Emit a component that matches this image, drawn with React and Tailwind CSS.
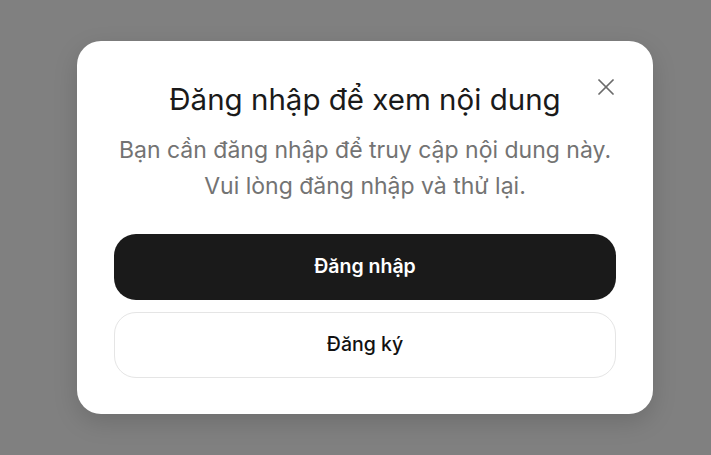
import { X } from "lucide-react"

export default function App() {
  return (
    <div
      className="w-full min-h-screen bg-[#808080] flex items-start pl-[77px] pt-[41px]"
      style={{ fontFamily: "Inter, 'Noto Sans', sans-serif" }}
    >
      <div className="relative w-[576px] h-[373px] bg-white rounded-[24px] shadow-[0_8px_24px_rgba(0,0,0,0.15)] px-[37px] pt-[40px] flex flex-col items-center">
        <button className="absolute top-[32px] right-[33px] text-[#6b6b6b]">
          <X size={28} strokeWidth={1.5} />
        </button>

        <h2 className="text-[29.5px] leading-[36px] font-normal text-[#1a1a1a] text-center">
          Đăng nhập để xem nội dung
        </h2>
        <p className="mt-[15px] text-[23px] leading-[36px] text-[#737373] text-center">
          Bạn cần đăng nhập để truy cập nội dung này.
          <br />
          Vui lòng đăng nhập và thử lại.
        </p>

        <div className="mt-[30px] w-full flex flex-col gap-3">
          <button className="w-full h-[66px] rounded-[22px] bg-[#1a1a1a] text-white text-[19.5px] font-semibold">
            Đăng nhập
          </button>
          <button className="w-full h-[66px] rounded-[22px] bg-white border border-[#e5e5e5] text-[#111] text-[19.5px] font-medium">
            Đăng ký
          </button>
        </div>
      </div>
    </div>
  )
}
